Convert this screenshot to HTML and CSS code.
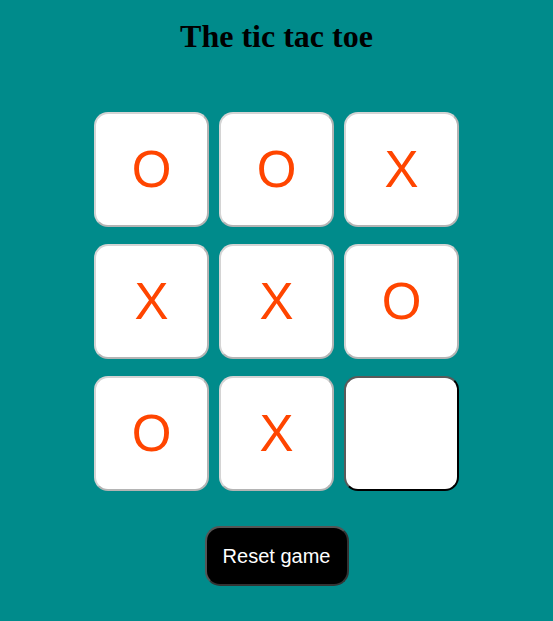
FILE: index.html
```html
<!DOCTYPE html>
<html lang="en">
<head>
<meta charset="utf-8">
<title>The tic tac toe</title>
<link rel="stylesheet" href="styles.css">
</head>
<body>
<main class="game">
  <h1 class="title">The tic tac toe</h1>
  <div class="board">
    <button class="cell">O</button>
    <button class="cell">O</button>
    <button class="cell">X</button>
    <button class="cell">X</button>
    <button class="cell">X</button>
    <button class="cell">O</button>
    <button class="cell">O</button>
    <button class="cell">X</button>
    <button class="cell cell-empty"></button>
  </div>
  <button class="reset">Reset game</button>
</main>
</body>
</html>
```

FILE: styles.css
```css
html, body {
  margin: 0;
  padding: 0;
}

body {
  background: #008b8b;
  min-height: 621px;
  font-family: "Liberation Serif", "Times New Roman", serif;
}

.game {
  display: flex;
  flex-direction: column;
  align-items: center;
  padding-top: 18px;
}

.title {
  margin: 0;
  font-size: 32px;
  font-weight: bold;
  line-height: 37px;
  color: #000;
}

.board {
  margin-top: 57px;
  display: grid;
  grid-template-columns: repeat(3, 115px);
  grid-template-rows: repeat(3, 115px);
  gap: 17px 10px;
}

.cell {
  box-sizing: border-box;
  width: 115px;
  height: 115px;
  padding: 0;
  background: #fff;
  border: 2px solid;
  border-color: #d4d4d4 #b4b4b4 #b4b4b4 #d4d4d4;
  border-radius: 14px;
  font-family: "Liberation Sans", Arial, sans-serif;
  font-size: 51px;
  color: #ff4500;
  line-height: 1;
}

.cell-empty {
  border-color: #5a5a5a #000 #000 #5a5a5a;
}

.reset {
  box-sizing: border-box;
  margin-top: 35px;
  width: 144px;
  height: 60px;
  background: #000;
  color: #fff;
  border: 2px solid;
  border-color: #555 #333 #333 #555;
  border-radius: 15px;
  font-family: "Liberation Sans", Arial, sans-serif;
  font-size: 20px;
  padding: 0;
}
```
